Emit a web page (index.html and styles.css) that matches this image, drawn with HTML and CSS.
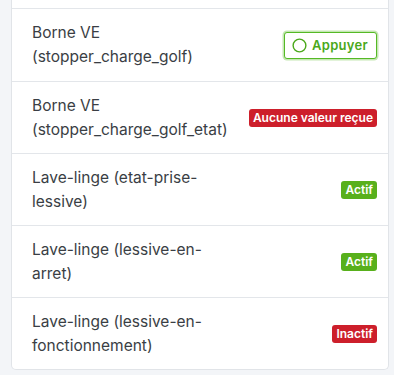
FILE: index.html
```html
<!DOCTYPE html>
<html lang="fr">
<head>
  <meta charset="UTF-8">
  <meta name="viewport" content="width=device-width, initial-scale=1.0">
  <title>Équipements</title>
  <link rel="stylesheet" href="styles.css">
</head>
<body>

  <div class="card">
    <div class="row-top"></div>

    <div class="row">
      <div class="label">Borne VE (stopper_charge_golf)</div>
      <button class="press-btn">
        <svg width="15" height="15" viewBox="0 0 16 16"><circle cx="8" cy="8" r="6.8" fill="none" stroke="currentColor" stroke-width="1.5"/></svg>
        Appuyer
      </button>
    </div>

    <div class="row">
      <div class="label">Borne VE (stopper_charge_golf_etat)</div>
      <span class="badge badge-red">Aucune valeur reçue</span>
    </div>

    <div class="row">
      <div class="label">Lave-linge (etat-prise-lessive)</div>
      <span class="badge badge-green">Actif</span>
    </div>

    <div class="row">
      <div class="label">Lave-linge (lessive-en-arret)</div>
      <span class="badge badge-green">Actif</span>
    </div>

    <div class="row">
      <div class="label">Lave-linge (lessive-en-fonctionnement)</div>
      <span class="badge badge-red">Inactif</span>
    </div>
  </div>

</body>
</html>
```

FILE: styles.css
```css
body {
  margin: 0;
  padding: 0 5px 6px 11px;
  background-color: #f3f5f8;
  font-family: Inter, "Noto Sans", sans-serif;
  color: #3a3e44;
}
.card {
  background-color: #ffffff;
  border: 1px solid #e1e4e8;
  border-top: none;
  border-radius: 0 0 5px 5px;
}
.row-top {
  height: 8px;
}
.row {
  display: flex;
  align-items: center;
  justify-content: space-between;
  box-sizing: border-box;
  height: 72px;
  border-top: 1px solid #e3e6ea;
  padding: 0 11px 0 20px;
}
.row-top + .row {
  height: 73px;
}
.label {
  width: 205px;
  font-size: 15.5px;
  line-height: 24px;
}
.press-btn {
  display: flex;
  align-items: center;
  gap: 5px;
  height: 27px;
  padding: 0 8px 0 7px;
  background-color: #ffffff;
  border: 1.5px solid #55b925;
  box-shadow: 0 0 0 1.5px rgba(85, 185, 37, 0.35);
  border-radius: 3px;
  color: #4aa81a;
  font-family: Inter, "Noto Sans", sans-serif;
  font-size: 13px;
  font-weight: 600;
  letter-spacing: 0.3px;
  cursor: pointer;
}
.badge {
  display: inline-block;
  height: 18px;
  line-height: 18px;
  padding: 0 4px;
  border-radius: 3px;
  color: #ffffff;
  font-size: 12px;
  font-weight: 600;
}
.badge-red {
  background-color: #cd1f2b;
}
.badge-green {
  background-color: #58b01c;
}
```
